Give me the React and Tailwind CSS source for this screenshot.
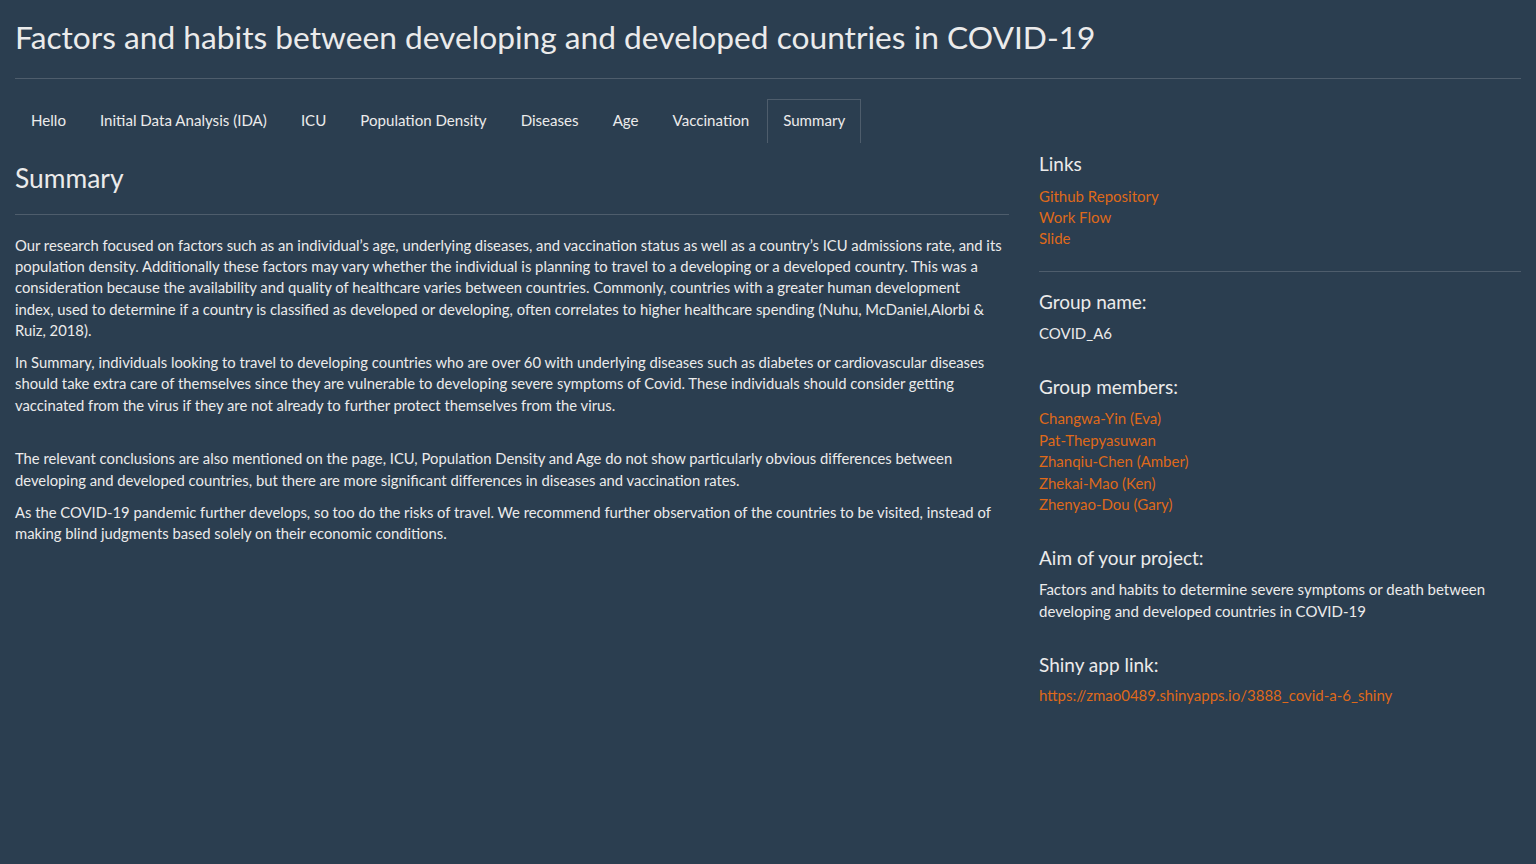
import React from "react";

const tabs = [
  "Hello",
  "Initial Data Analysis (IDA)",
  "ICU",
  "Population Density",
  "Diseases",
  "Age",
  "Vaccination",
  "Summary",
];

const members = [
  "Changwa-Yin (Eva)",
  "Pat-Thepyasuwan",
  "Zhanqiu-Chen (Amber)",
  "Zhekai-Mao (Ken)",
  "Zhenyao-Dou (Gary)",
];

const App = () => {
  return (
    <div
      className="min-h-screen bg-[#2b3e50] text-[#ebebeb] px-[15px] text-[15px] leading-[1.42857]"
      style={{ fontFamily: "Lato, 'Open Sans', sans-serif" }}
    >
      <h2 className="text-[31.7px] leading-[33px] font-normal pt-[21px] mb-[10px]">
        Factors and habits between developing and developed countries in COVID-19
      </h2>
      <hr className="mt-[24px] border-t border-[#4e5d6c]" />

      {/* tabs */}
      <ul className="flex mt-[20px] text-[15.1px]">
        {tabs.map((tab) => (
          <li key={tab} className="mr-[2px]">
            <a
              href="#"
              className={
                tab === "Summary"
                  ? "block px-[15px] pt-[10px] pb-[11px] border border-b-0 border-[#4e5d6c] text-[#ebebeb]"
                  : "block px-[15px] pt-[10px] pb-[11px] border border-transparent text-[#ebebeb]"
              }
            >
              {tab}
            </a>
          </li>
        ))}
      </ul>

      <div className="flex -mx-[15px]">
        {/* main column */}
        <div className="w-2/3 px-[15px] text-[14.8px] leading-[21.4px]">
          <h3 className="text-[26.4px] leading-[26px] font-normal mt-[21px]">Summary</h3>
          <hr className="mt-[23px] border-t border-[#4e5d6c]" />
          <p className="mt-[20px] mb-[10.5px]">
            Our research focused on factors such as an individual’s age, underlying diseases, and
            vaccination status as well as a country’s ICU admissions rate, and its population density.
            Additionally these factors may vary whether the individual is planning to travel to a
            developing or a developed country. This was a consideration because the availability and
            quality of healthcare varies between countries. Commonly, countries with a greater human
            development
            <br />
            index, used to determine if a country is classified as developed or developing, often
            correlates to higher healthcare spending (Nuhu, McDaniel,Alorbi &amp; Ruiz, 2018).
          </p>
          <p className="mb-[10.5px]">
            In Summary, individuals looking to travel to developing countries who are over 60 with
            underlying diseases such as diabetes or cardiovascular diseases should take extra care of
            themselves since they are vulnerable to developing severe symptoms of Covid. These
            individuals should consider getting vaccinated from the virus if they are not already to
            further protect themselves from the virus.
          </p>
          <p className="mt-[32px] mb-[10.5px]">
            The relevant conclusions are also mentioned on the page, ICU, Population Density and Age do
            not show particularly obvious differences between developing and developed countries, but
            there are more significant differences in diseases and vaccination rates.
          </p>
          <p className="mb-[10.5px]">
            As the COVID-19 pandemic further develops, so too do the risks of travel. We recommend
            further observation of the countries to be visited, instead of making blind judgments based
            solely on their economic conditions.
          </p>
        </div>

        {/* sidebar */}
        <div className="w-1/3 px-[15px]">
          <h4 className="text-[19px] leading-[20px] font-normal mt-[10px]">Links</h4>
          <div className="mt-[12px] flex flex-col text-[#df691a]">
            <a href="#">Github Repository</a>
            <a href="#">Work Flow</a>
            <a href="#">Slide</a>
          </div>
          <hr className="mt-[21px] border-t border-[#4e5d6c]" />
          <h4 className="text-[19px] leading-[20px] font-normal mt-[20px]">Group name:</h4>
          <p className="mt-[11px]">COVID_A6</p>
          <h4 className="text-[19px] leading-[20px] font-normal mt-[33px]">Group members:</h4>
          <div className="mt-[11px] flex flex-col text-[#df691a]">
            {members.map((m) => (
              <a key={m} href="#">
                {m}
              </a>
            ))}
          </div>
          <h4 className="text-[19px] leading-[20px] font-normal mt-[33px]">Aim of your project:</h4>
          <p className="mt-[11px]">
            Factors and habits to determine severe symptoms or death between developing and developed
            countries in COVID-19
          </p>
          <h4 className="text-[19px] leading-[20px] font-normal mt-[33px]">Shiny app link:</h4>
          <a href="#" className="block mt-[10px] text-[#df691a]">
            https://zmao0489.shinyapps.io/3888_covid-a-6_shiny
          </a>
        </div>
      </div>
    </div>
  );
};

export default App;
